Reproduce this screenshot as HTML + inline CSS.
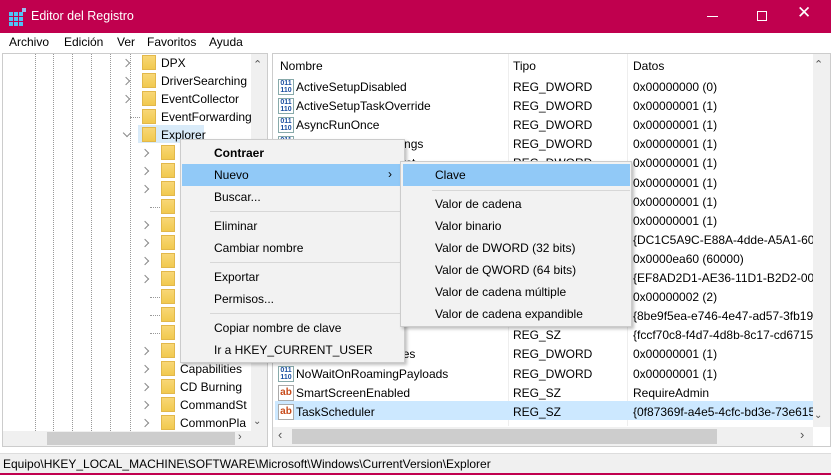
<!DOCTYPE html>
<html><head><meta charset="utf-8"><style>
*{margin:0;padding:0;box-sizing:border-box}
body{width:831px;height:475px;overflow:hidden;background:#fff;font-family:"Liberation Sans",sans-serif;font-size:12px;color:#000;position:relative}
.a{position:absolute;white-space:nowrap}
.t{line-height:18px}
.fold{position:absolute;width:14px;height:15px;background:linear-gradient(#f8d775,#f1c94f);border:1px solid #e2b84a}
.chev{position:absolute;width:6px;height:6px;border-right:1.3px solid #888;border-bottom:1.3px solid #888}
.dl{position:absolute;width:1px;border-left:1px dotted #999}
.dh{position:absolute;height:1px;border-top:1px dotted #999}
.ic{position:absolute;width:16px;height:16px}
.ib{background:#fff;border:1px solid #8aa;color:#1b4fa0;font-size:7px;line-height:7px;font-weight:bold;text-align:center;padding-top:0}
.ia{background:#fff;border:1px solid #aaa;color:#c84b1a;font-size:10px;font-weight:bold;line-height:14px;text-align:center}
.mi{position:absolute;left:214px}
.si{position:absolute;left:435px}
</style></head><body>
<div class="a" style="left:0;top:0;width:831px;height:33px;background:#c0004e"></div>
<svg class="a" style="left:9px;top:8px" width="18" height="18"><g fill="#4fc3f7"><rect x="0" y="4" width="4" height="4"/><rect x="5" y="4" width="4" height="4"/><rect x="10" y="4" width="4" height="4"/><rect x="0" y="9" width="4" height="4"/><rect x="5" y="9" width="4" height="4"/><rect x="10" y="9" width="4" height="4"/><rect x="0" y="14" width="4" height="4"/><rect x="5" y="14" width="4" height="4"/><rect x="10" y="14" width="4" height="4"/><rect x="13" y="0" width="4" height="4" fill="#9be"/></g></svg>
<div class="a" style="left:31px;top:9px;color:#fff;font-size:12.5px">Editor del Registro</div>
<div class="a" style="left:707px;top:16px;width:11px;height:1px;background:#fff"></div>
<div class="a" style="left:757px;top:11px;width:10px;height:10px;border:1px solid #fff"></div>
<div class="a" style="left:797px;top:3px;color:#fff;font-size:17px">✕</div>
<div class="a" style="left:0;top:33px;width:831px;height:19px;background:#fff"></div>
<div class="a" style="left:9px;top:35px">Archivo</div><div class="a" style="left:64px;top:35px">Edición</div><div class="a" style="left:117px;top:35px">Ver</div><div class="a" style="left:147px;top:35px">Favoritos</div><div class="a" style="left:209px;top:35px">Ayuda</div>
<div class="a" style="left:2px;top:53px;width:266px;height:394px;border:1px solid #ccc"></div>
<div class="a" style="left:251px;top:54px;width:16px;height:378px;background:#f0f0f0"></div>
<div class="a" style="left:253px;top:58px;font-size:11px;color:#555">⌃</div>
<div class="a" style="left:253px;top:416px;font-size:10px;color:#555">⌄</div>
<div class="a" style="left:3px;top:431px;width:248px;height:15px;background:#f0f0f0"></div>
<div class="a" style="left:47px;top:432px;width:188px;height:13px;background:#cdcdcd"></div>
<div class="a" style="left:238px;top:431px;font-size:11px;color:#555">›</div>
<div class="a" style="left:251px;top:431px;width:16px;height:15px;background:#f0f0f0"></div>
<div class="dl" style="left:35px;top:54px;height:377px"></div>
<div class="dl" style="left:53px;top:54px;height:377px"></div>
<div class="dl" style="left:72px;top:54px;height:377px"></div>
<div class="dl" style="left:91px;top:54px;height:377px"></div>
<div class="dl" style="left:110px;top:54px;height:377px"></div>
<div class="dl" style="left:130px;top:54px;height:377px"></div>
<div class="a" style="left:138px;top:125px;width:66px;height:18px;background:#d9ebf9"></div>
<div id="tree"></div>
<div class="a" style="left:272px;top:53px;width:559px;height:394px;border:1px solid #ccc"></div>
<div class="a" style="left:508px;top:54px;width:1px;height:372px;background:#eee"></div>
<div class="a" style="left:627px;top:54px;width:1px;height:372px;background:#eee"></div>
<div class="a" style="left:280px;top:59px">Nombre</div><div class="a" style="left:513px;top:59px">Tipo</div><div class="a" style="left:633px;top:59px">Datos</div>
<div class="a" style="left:275px;top:401px;width:538px;height:19px;background:#cce8ff"></div>
<div id="list"></div>
<div class="a" style="left:813px;top:54px;width:17px;height:373px;background:#f0f0f0"></div>
<div class="a" style="left:814px;top:58px;font-size:11px;color:#555">⌃</div>
<div class="a" style="left:814px;top:410px;font-size:10px;color:#555">⌄</div>
<div class="a" style="left:273px;top:427px;width:540px;height:19px;background:#f0f0f0"></div>
<div class="a" style="left:292px;top:429px;width:425px;height:15px;background:#cdcdcd"></div>
<div class="a" style="left:278px;top:427px;font-size:13px;color:#555">‹</div>
<div class="a" style="left:800px;top:427px;font-size:13px;color:#555">›</div>
<div class="a" style="left:0;top:453px;width:831px;height:20px;background:#f0f0f0;border-top:1px solid #ddd"></div>
<div class="a" style="left:3px;top:457px">Equipo\HKEY_LOCAL_MACHINE\SOFTWARE\Microsoft\Windows\CurrentVersion\Explorer</div>
<div class="a" style="left:0;top:473px;width:831px;height:2px;background:#c0004e"></div>
<div class="a" style="left:180px;top:139px;width:225px;height:224px;background:#f2f2f2;border:1px solid #ccc;box-shadow:2px 2px 3px rgba(0,0,0,.25)"></div>
<div class="a" style="left:182px;top:164px;width:218px;height:22px;background:#91c9f7"></div>
<div class="a" style="left:210px;top:211px;width:190px;height:1px;background:#d7d7d7"></div>
<div class="a" style="left:210px;top:262px;width:190px;height:1px;background:#d7d7d7"></div>
<div class="a" style="left:210px;top:313px;width:190px;height:1px;background:#d7d7d7"></div>
<div class="mi" style="top:146px;font-weight:bold">Contraer</div>
<div class="mi" style="top:168px">Nuevo</div><div class="a" style="left:388px;top:167px">›</div>
<div class="mi" style="top:190px">Buscar...</div>
<div class="mi" style="top:219px">Eliminar</div>
<div class="mi" style="top:241px">Cambiar nombre</div>
<div class="mi" style="top:270px">Exportar</div>
<div class="mi" style="top:292px">Permisos...</div>
<div class="mi" style="top:321px">Copiar nombre de clave</div>
<div class="mi" style="top:343px">Ir a HKEY_CURRENT_USER</div>
<div class="a" style="left:400px;top:161px;width:232px;height:166px;background:#f2f2f2;border:1px solid #ccc;box-shadow:2px 2px 3px rgba(0,0,0,.25)"></div>
<div class="a" style="left:403px;top:164px;width:227px;height:22px;background:#91c9f7"></div>
<div class="a" style="left:432px;top:190px;width:198px;height:1px;background:#d7d7d7"></div>
<div class="si" style="top:168px">Clave</div>
<div class="si" style="top:197px">Valor de cadena</div>
<div class="si" style="top:219px">Valor binario</div>
<div class="si" style="top:241px">Valor de DWORD (32 bits)</div>
<div class="si" style="top:263px">Valor de QWORD (64 bits)</div>
<div class="si" style="top:285px">Valor de cadena múltiple</div>
<div class="si" style="top:307px">Valor de cadena expandible</div>
<script>
(function(){
var t=document.getElementById('tree'),h='';
var rows=[["DPX",1],["DriverSearching",1],["EventCollector",1],["EventForwarding",0],["Explorer",2]];
rows.forEach(function(r,i){var y=54+i*18;
 if(r[1]==1)h+='<div class="chev" style="left:123px;top:'+(y+6)+'px;transform:rotate(-45deg)"></div>';
 else if(r[1]==2)h+='<div class="chev" style="left:124px;top:'+(y+4)+'px;transform:rotate(45deg)"></div>';
 else h+='<div class="dh" style="left:130px;top:'+(y+9)+'px;width:10px"></div>';
 h+='<div class="fold" style="left:142px;top:'+(y+1)+'px"></div><div class="a t" style="left:161px;top:'+y+'px">'+r[0]+'</div>';});
var sub=[1,1,1,0,1,1,1,1,0,0,0,1,1,1,1,1],nm={12:"Capabilities",13:"CD Burning",14:"CommandSt",15:"CommonPla"};
sub.forEach(function(c,i){var y=144+i*18;
 if(c)h+='<div class="chev" style="left:142px;top:'+(y+6)+'px;transform:rotate(-45deg)"></div>';
 else h+='<div class="dh" style="left:150px;top:'+(y+9)+'px;width:10px"></div>';
 h+='<div class="fold" style="left:161px;top:'+(y+1)+'px"></div>';
 if(nm[i])h+='<div class="a t" style="left:180px;top:'+y+'px;width:70px;overflow:hidden">'+nm[i]+'</div>';});
t.innerHTML=h;
var L=[["ActiveSetupDisabled","REG_DWORD","0x00000000 (0)",0],["ActiveSetupTaskOverride","REG_DWORD","0x00000001 (1)",0],["AsyncRunOnce","REG_DWORD","0x00000001 (1)",0],["DisableResetbySettings","REG_DWORD","0x00000001 (1)",0],["EarlyAppResolverFirst","REG_DWORD","0x00000001 (1)",0],["FSIASleepTimeInMs","REG_DWORD","0x00000001 (1)",0],["GlobalAssocChanged","REG_DWORD","0x00000001 (1)",0],["IconUnderline","REG_DWORD","0x00000001 (1)",0],["ListViewPopupControl","REG_SZ","{DC1C5A9C-E88A-4dde-A5A1-60F",1],["LVPopupSearchControl","REG_DWORD","0x0000ea60 (60000)",0],["MachineOobeUpdates","REG_SZ","{EF8AD2D1-AE36-11D1-B2D2-0060",1],["NoPreviousVersions","REG_DWORD","0x00000002 (2)",0],["PaintDesktopVersion","REG_SZ","{8be9f5ea-e746-4e47-ad57-3fb191",1],["SearchControl","REG_SZ","{fccf70c8-f4d7-4d8b-8c17-cd6715",1],["MachineOobeUpdates","REG_DWORD","0x00000001 (1)",0],["NoWaitOnRoamingPayloads","REG_DWORD","0x00000001 (1)",0],["SmartScreenEnabled","REG_SZ","RequireAdmin",1],["TaskScheduler","REG_SZ","{0f87369f-a4e5-4cfc-bd3e-73e6154",1]];
h='';L.forEach(function(r,i){var y=78+i*19.1;
 h+=(r[3]?'<div class="ic ia" style="left:278px;top:'+(y+1)+'px">ab</div>':'<div class="ic ib" style="left:278px;top:'+(y+1)+'px">011<br>110</div>');
 h+='<div class="a t" style="left:296px;top:'+y+'px">'+r[0]+'</div><div class="a t" style="left:513px;top:'+y+'px">'+r[1]+'</div><div class="a t" style="left:633px;top:'+y+'px;width:180px;overflow:hidden">'+r[2]+'</div>';});
document.getElementById('list').innerHTML=h;
})();
</script>
</body></html>
